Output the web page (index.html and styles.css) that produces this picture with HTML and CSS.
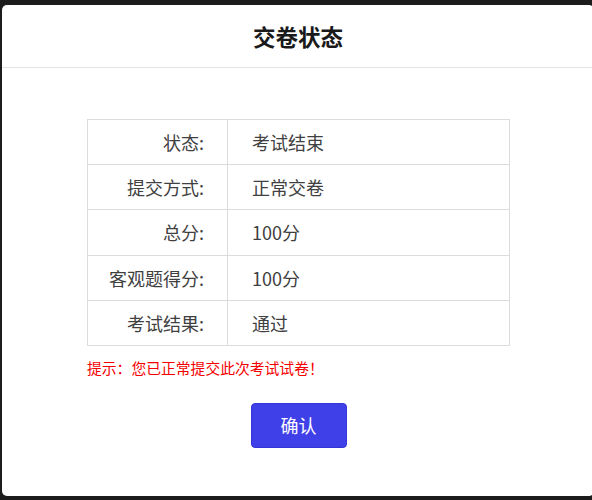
FILE: index.html
```html
<!DOCTYPE html>
<html lang="zh">
<head>
<meta charset="utf-8">
<link rel="stylesheet" href="styles.css">
</head>
<body>
<div class="dialog">
  <div class="dialog-header">交卷状态</div>
  <div class="dialog-body">
    <table class="info">
      <tr><td class="label">状态:</td><td class="value">考试结束</td></tr>
      <tr><td class="label">提交方式:</td><td class="value">正常交卷</td></tr>
      <tr><td class="label">总分:</td><td class="value">100分</td></tr>
      <tr><td class="label">客观题得分:</td><td class="value">100分</td></tr>
      <tr><td class="label">考试结果:</td><td class="value">通过</td></tr>
    </table>
    <p class="hint">提示：您已正常提交此次考试试卷！</p>
    <div class="actions"><button class="btn">确认</button></div>
  </div>
</div>
</body>
</html>
```

FILE: styles.css
```css
html, body {
  margin: 0;
  padding: 0;
  background: #1c1c1c;
  overflow: hidden;
  height: 500px;
}
body {
  font-family: "Noto Sans CJK SC", "Noto Sans", sans-serif;
  padding: 5px 0 0 2px;
  box-sizing: border-box;
}
.dialog {
  background: #fff;
  width: 592px;
  height: 491px;
  border-radius: 5px;
  box-sizing: border-box;
}
.dialog-header {
  height: 62px;
  border-bottom: 1px solid #e3e3e3;
  display: flex;
  align-items: center;
  justify-content: center;
  font-size: 22.5px;
  font-weight: 700;
  color: #1a1a1a;
}
.dialog-body {
  padding: 51px 0 0 85px;
}
.info {
  border-collapse: collapse;
  width: 423px;
  font-size: 18px;
  color: #404040;
}
.info td {
  border: 1px solid #dcdcdc;
  height: 44.2px;
  padding: 0;
  line-height: 1;
}
.label {
  width: 116px;
  text-align: right;
  padding-right: 23px !important;
}
.value {
  padding-left: 24px !important;
}
.hint {
  margin: 12px 0 0 0;
  font-size: 14.8px;
  line-height: 20px;
  color: #f50000;
}
.actions {
  margin-top: 25px;
  width: 423px;
  display: flex;
  justify-content: center;
}
.btn {
  width: 96px;
  height: 45px;
  background: #4040e8;
  border: 1px solid #3535d8;
  border-radius: 4px;
  color: #fff;
  font-family: "Noto Sans CJK SC", sans-serif;
  font-size: 18px;
  padding: 0;
}
```
